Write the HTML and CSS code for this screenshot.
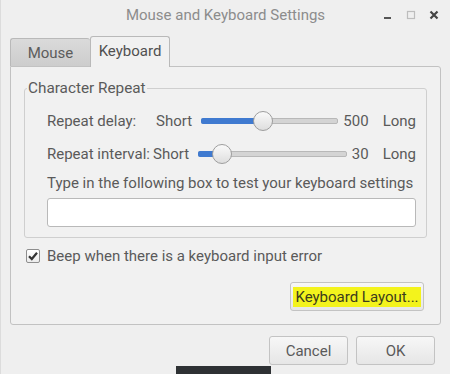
FILE: index.html
```html
<!DOCTYPE html>
<html>
<head>
<meta charset="utf-8">
<link rel="stylesheet" href="styles.css">
</head>
<body>
<div class="window">
  <div class="titlebar">
    <div class="title">Mouse and Keyboard Settings</div>
    <div class="controls">
      <svg class="ctl" width="12" height="12" viewBox="0 0 12 12"><rect x="2" y="8" width="7" height="2" fill="#555"/></svg>
      <svg class="ctl" width="12" height="12" viewBox="0 0 12 12"><rect x="2.5" y="2.5" width="7" height="7" fill="none" stroke="#bdbdbd" stroke-width="1.2"/></svg>
      <svg class="ctl" width="12" height="12" viewBox="0 0 12 12"><path d="M2.5 2.5 L9.5 9.5 M9.5 2.5 L2.5 9.5" stroke="#444" stroke-width="2.2" stroke-linecap="butt"/></svg>
    </div>
  </div>
  <div class="tabs">
    <div class="tab tab-inactive">Mouse</div>
    <div class="tab tab-active">Keyboard</div>
  </div>
  <div class="panel">
    <fieldset class="group">
      <legend>Character Repeat</legend>
      <div class="group-body">
        <div class="srow">
          <div class="slabel slabel-delay">Repeat delay:</div>
          <div class="short">Short</div>
          <div class="slider">
            <div class="track"></div>
            <div class="fill" style="width:45%"></div>
            <div class="knob" style="left:calc(45% - 10px)"></div>
          </div>
          <div class="val">500</div>
          <div class="long">Long</div>
        </div>
        <div class="srow">
          <div class="slabel slabel-int">Repeat interval:</div>
          <div class="short">Short</div>
          <div class="slider">
            <div class="track"></div>
            <div class="fill" style="width:16%"></div>
            <div class="knob" style="left:calc(16% - 10px)"></div>
          </div>
          <div class="val">30</div>
          <div class="long">Long</div>
        </div>
        <div class="testlabel">Type in the following box to test your keyboard settings</div>
        <div class="entry"></div>
      </div>
    </fieldset>
    <div class="check">
      <span class="box"><svg width="12" height="12" viewBox="0 0 12 12"><path d="M2 6.2 L4.8 9 L10 2.8" fill="none" stroke="#333" stroke-width="2.2"/></svg></span>
      <span>Beep when there is a keyboard input error</span>
    </div>
    <div class="layout-row">
      <div class="btn btn-layout"><span class="hl">Keyboard Layout...</span></div>
    </div>
  </div>
  <div class="actions">
    <div class="btn btn-action">Cancel</div>
    <div class="btn btn-action">OK</div>
  </div>
  <div class="stub"></div>
</div>
</body>
</html>
```
FILE: styles.css
```css
html, body {
  margin: 0;
  padding: 0;
}
body {
  width: 450px;
  height: 374px;
  overflow: hidden;
  background: #efefef;
  font-family: Roboto, "Liberation Sans", sans-serif;
  color: #5a5a5a;
}
.window {
  display: flex;
  flex-direction: column;
  width: 450px;
  height: 374px;
  box-sizing: border-box;
  border-left: 1px solid #dcdcdc;
}
.window > * {
  flex-shrink: 0;
}
.titlebar {
  height: 36px;
  display: flex;
  position: relative;
}
.title {
  flex: 1;
  text-align: center;
  line-height: 31px;
  font-size: 15px;
  color: #8c8c8c;
}
.controls {
  position: absolute;
  right: 10px;
  top: 9px;
  display: flex;
  gap: 11px;
}
.tabs {
  height: 30px;
  display: flex;
  align-items: flex-end;
  padding-left: 9px;
  position: relative;
  z-index: 2;
}
.tab {
  width: 80px;
  box-sizing: border-box;
  text-align: center;
  font-size: 15px;
  border: 1px solid #b9b9b9;
  border-bottom: none;
  border-radius: 3px 3px 0 0;
}
.tab-inactive {
  height: 28px;
  line-height: 29px;
  background: linear-gradient(#dadada, #cdcdcd);
  color: #5c5c5c;
  border-right: none;
}
.tab-active {
  height: 31px;
  line-height: 29px;
  background: #f1f1f1;
  margin-bottom: -1px;
  color: #505050;
}
.panel {
  margin: 0 9px 0 9px;
  border: 1px solid #c2c2c2;
  border-radius: 0 3px 3px 3px;
  background: #f1f1f1;
  padding: 0 0 13px 0;
  display: flex;
  flex-direction: column;
}
.group {
  margin: 12px 13px 0 13px;
  padding: 7px 0 10px 2px;
  border: 1px solid #cfcfcf;
  border-radius: 3px;
  min-width: 0;
}
.group legend {
  padding: 0 1px;
  font-size: 15.3px;
  line-height: 18px;
  color: #5a5a5a;
}
.group-body {
  padding: 0 10px 0 20px;
  display: flex;
  flex-direction: column;
}
.srow {
  height: 33px;
  display: flex;
  align-items: center;
  font-size: 15px;
}
.slabel-delay { width: 109px; }
.slabel-int { width: 106px; }
.short { width: 45px; }
.slider {
  flex: 1;
  position: relative;
  height: 22px;
}
.track {
  position: absolute;
  left: 0;
  right: 0;
  top: 8px;
  height: 4px;
  background: #d4d4d4;
  border: 1px solid #b8b8b8;
  border-radius: 2px;
}
.fill {
  position: absolute;
  left: 0;
  top: 8px;
  height: 6px;
  background: #3f7ad0;
  border-radius: 2px;
}
.knob {
  position: absolute;
  top: 1px;
  width: 18px;
  height: 18px;
  border-radius: 50%;
  border: 1px solid #9e9e9e;
  background: linear-gradient(#fafafa, #dedede);
}
.val { margin-left: 5px; }
.long { margin-left: 14px; }
.testlabel {
  margin-top: 3px;
  line-height: 20px;
  font-size: 15px;
  white-space: nowrap;
}
.entry {
  margin-top: 5px;
  height: 29px;
  box-sizing: border-box;
  background: #fff;
  border: 1px solid #b9b9b9;
  border-radius: 3px;
}
.check {
  margin: 8px 0 0 15px;
  height: 20px;
  display: flex;
  align-items: center;
  gap: 7px;
  font-size: 15px;
}
.box {
  width: 14px;
  height: 14px;
  box-sizing: border-box;
  border: 1px solid #8e8e8e;
  border-radius: 2px;
  background: linear-gradient(#fff, #ececec);
  display: flex;
  align-items: center;
  justify-content: center;
}
.layout-row {
  display: flex;
  justify-content: flex-end;
  margin-top: 16px;
  padding-right: 16px;
}
.btn {
  height: 29px;
  box-sizing: border-box;
  border: 1px solid #c3c3c3;
  border-radius: 3px;
  background: linear-gradient(#f7f7f7, #e6e6e6);
  display: flex;
  align-items: center;
  justify-content: center;
  font-size: 15px;
  color: #5a5a5a;
}
.btn-layout { width: 134px; }
.hl {
  background: #f3f31c;
  color: #3c3c1c;
  padding: 1px 2px;
  line-height: 18px;
}
.actions {
  display: flex;
  justify-content: flex-end;
  gap: 8px;
  margin-top: 11px;
  padding-right: 15px;
}
.btn-action { width: 79px; }
.stub {
  margin: 1px 0 0 175px;
  width: 95px;
  height: 8px;
  background: #2e3134;
}
```
